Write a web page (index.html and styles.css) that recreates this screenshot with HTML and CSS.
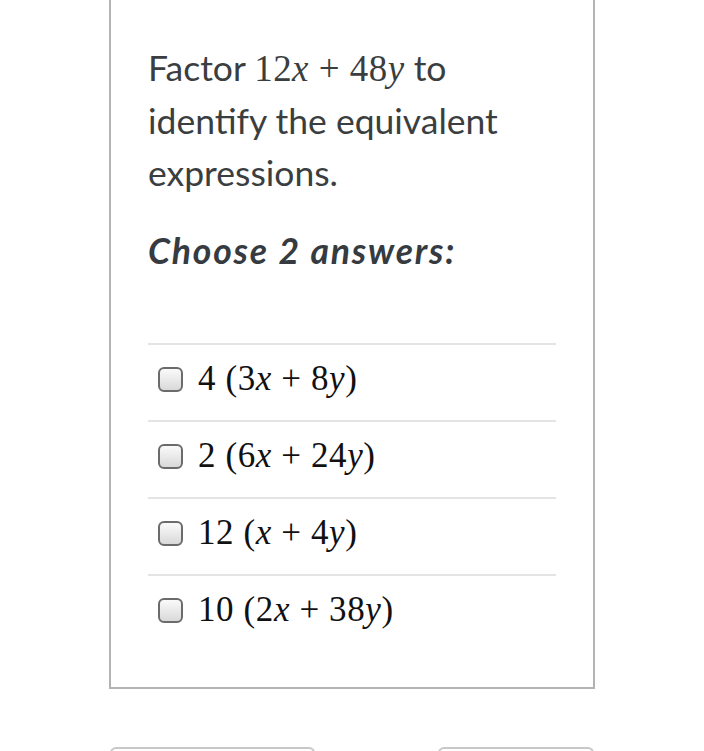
FILE: index.html
```html
<!DOCTYPE html>
<html>
<head>
<meta charset="utf-8">
<link rel="stylesheet" href="styles.css">
</head>
<body>
<div class="card">
  <p class="question">Factor <span class="math">12<i>x</i> + 48<i>y</i></span> to identify the equivalent expressions.</p>
  <p class="instr">Choose 2 answers:</p>
  <ul class="choices">
    <li class="choice"><span class="box"></span><span class="math">4 (3<i>x</i> + 8<i>y</i>)</span></li>
    <li class="choice"><span class="box"></span><span class="math">2 (6<i>x</i> + 24<i>y</i>)</span></li>
    <li class="choice"><span class="box"></span><span class="math">12 (<i>x</i> + 4<i>y</i>)</span></li>
    <li class="choice"><span class="box"></span><span class="math">10 (2<i>x</i> + 38<i>y</i>)</span></li>
  </ul>
</div>
<div class="buttons">
  <div class="btn btn-left"></div>
  <div class="btn btn-right"></div>
</div>
</body>
</html>
```

FILE: styles.css
```css
html, body {
  margin: 0;
  padding: 0;
  background: #ffffff;
}
body {
  width: 704px;
  height: 751px;
  overflow: hidden;
  font-family: Lato, "Open Sans", sans-serif;
  color: #3b3e40;
}
.card {
  margin-left: 109px;
  border: 2px solid #b3b3b3;
  border-top: none;
  padding: 42px 37px 36px 37px;
  box-sizing: content-box;
  width: 408px;
}
.question {
  margin: 0;
  font-size: 35.5px;
  line-height: 52px;
}
.math {
  font-family: "Liberation Serif", "DejaVu Serif", serif;
  font-size: 1.04em;
  letter-spacing: 0.5px;
}
.math i {
  font-style: italic;
}
.instr {
  margin: 25.5px 0 0 0;
  font-size: 35.5px;
  line-height: 52px;
  font-weight: bold;
  font-style: italic;
  color: #353b40;
  letter-spacing: 1.8px;
}
.choices {
  list-style: none;
  margin: 66px 0 0 0;
  padding: 0;
}
.choice {
  display: flex;
  align-items: center;
  gap: 15px;
  height: 77px;
  box-sizing: border-box;
  padding-bottom: 6px;
  border-top: 2px solid #e4e4e4;
  padding-left: 10px;
  color: #111;
}
.choice .math {
  font-size: 35px;
  letter-spacing: 0.6px;
}
.box {
  width: 21px;
  height: 21px;
  border: 2px solid #6b6b6b;
  border-radius: 6px;
  background: linear-gradient(#fafafa, #d9d9d9);
  flex: none;
}
.buttons {
  display: flex;
  justify-content: space-between;
  margin-left: 110px;
  width: 484px;
  margin-top: 58px;
}
.btn {
  height: 20px;
  border: 2px solid #c8c8c8;
  border-bottom: none;
  border-radius: 6px 6px 0 0;
}
.btn-left { width: 201px; }
.btn-right { width: 152px; }
```
